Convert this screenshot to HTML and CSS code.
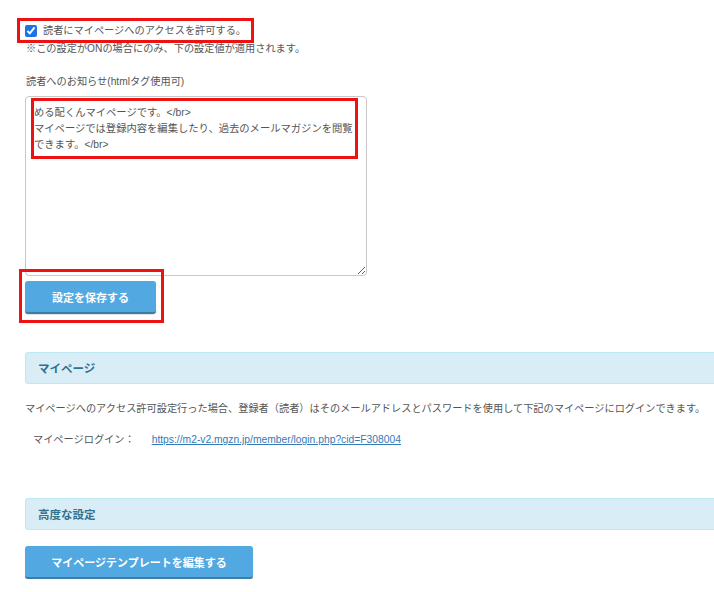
FILE: index.html
```html
<!DOCTYPE html>
<html lang="ja">
<head>
<meta charset="utf-8">
<title>マイページ設定</title>
<link rel="stylesheet" href="styles.css">
</head>
<body>
<div class="page">
  <label class="check-row">
    <input type="checkbox" class="check" checked>
    <span>読者にマイページへのアクセスを許可する。</span>
  </label>
  <p class="note">※この設定がONの場合にのみ、下の設定値が適用されます。</p>

  <p class="field-label">読者へのお知らせ(htmlタグ使用可)</p>
  <div class="textarea-wrap">
    <textarea class="notice">める配くんマイページです。&lt;/br&gt;
マイページでは登録内容を編集したり、過去のメールマガジンを閲覧できます。&lt;/br&gt;</textarea>
    <span class="mark mark-text"></span>
  </div>

  <div class="save-wrap">
    <button class="btn btn-save" type="button">設定を保存する</button>
    <span class="mark mark-save"></span>
  </div>

  <div class="section-head section-mypage">マイページ</div>
  <p class="desc">マイページへのアクセス許可設定行った場合、登録者（読者）はそのメールアドレスとパスワードを使用して下記のマイページにログインできます。</p>
  <p class="login-row"><span class="login-label">マイページログイン：</span><a class="login-link" href="#">https://m2-v2.mgzn.jp/member/login.php?cid=F308004</a></p>

  <div class="section-head section-adv">高度な設定</div>
  <button class="btn btn-template" type="button">マイページテンプレートを編集する</button>
</div>
</body>
</html>
```

FILE: styles.css
```css
html, body {
  margin: 0;
  padding: 0;
  overflow: hidden;
  background: #fff;
}

body {
  font-family: "Liberation Sans", "Noto Sans CJK JP", sans-serif;
  font-size: 10.2px;
  color: #555;
}

.page {
  width: 700px;
  padding: 18px 0 0 25px;
}

p {
  margin: 0;
}

.check-row {
  display: flex;
  align-items: center;
  width: max-content;
  height: 25px;
  box-sizing: border-box;
  margin-left: -8px;
  padding: 0 5px 0 5px;
  border: 3px solid #ee1111;
  gap: 6px;
  line-height: 14px;
}

.check {
  margin: 0;
  width: 12px;
  height: 12px;
  accent-color: #1a73e8;
}

.note {
  line-height: 12px;
  margin-left: 1px;
}

.field-label {
  margin-top: 21px;
  line-height: 12px;
  margin-left: 1px;
}

.textarea-wrap {
  position: relative;
  width: 342px;
  margin-top: 8px;
}

.notice {
  display: block;
  width: 342px;
  height: 180px;
  box-sizing: border-box;
  margin: 0;
  padding: 8px;
  border: 1px solid #c8c8c8;
  border-radius: 4px;
  font-family: "Liberation Sans", "Noto Sans CJK JP", sans-serif;
  font-size: 10.3px;
  line-height: 16px;
  color: #555;
  resize: vertical;
  background: #fff;
}

.mark {
  position: absolute;
  border: 3px solid #ee1111;
  pointer-events: none;
}

.mark-text {
  left: 6px;
  top: 2px;
  width: 327px;
  height: 61px;
  box-sizing: border-box;
}

.save-wrap {
  position: relative;
  display: inline-block;
  margin-top: 5px;
  vertical-align: top;
}

.mark-save {
  left: -6px;
  top: -12px;
  right: -8px;
  bottom: -9px;
}

.btn {
  display: block;
  height: 33px;
  box-sizing: border-box;
  border: none;
  border-bottom: 2px solid #3f7ba3;
  border-radius: 3px;
  background: #52a8e0;
  color: #fff;
  font-family: "Liberation Sans", "Noto Sans CJK JP", sans-serif;
  font-size: 11px;
  font-weight: bold;
  cursor: pointer;
  box-shadow: 0 1px 1px rgba(0, 0, 0, 0.12);
}

.btn-save {
  width: 131px;
}

.btn-template {
  width: 228px;
  margin-top: 16px;
}

.section-head {
  display: flex;
  align-items: center;
  height: 32px;
  box-sizing: border-box;
  padding-left: 12px;
  background: #d9edf7;
  border: 1px solid #bce8f1;
  border-radius: 3px;
  color: #31708f;
  font-size: 11.5px;
  font-weight: bold;
}

.section-mypage {
  margin-top: 38px;
}

.desc {
  margin-top: 18px;
  line-height: 14px;
  white-space: nowrap;
}

.login-row {
  margin-top: 17px;
  line-height: 14px;
  padding-left: 8px;
}

.login-label {
  display: inline-block;
}

.login-link {
  margin-left: 17px;
  color: #337ab7;
  font-size: 10.3px;
  text-decoration: underline;
}

.section-adv {
  margin-top: 51px;
}
```
